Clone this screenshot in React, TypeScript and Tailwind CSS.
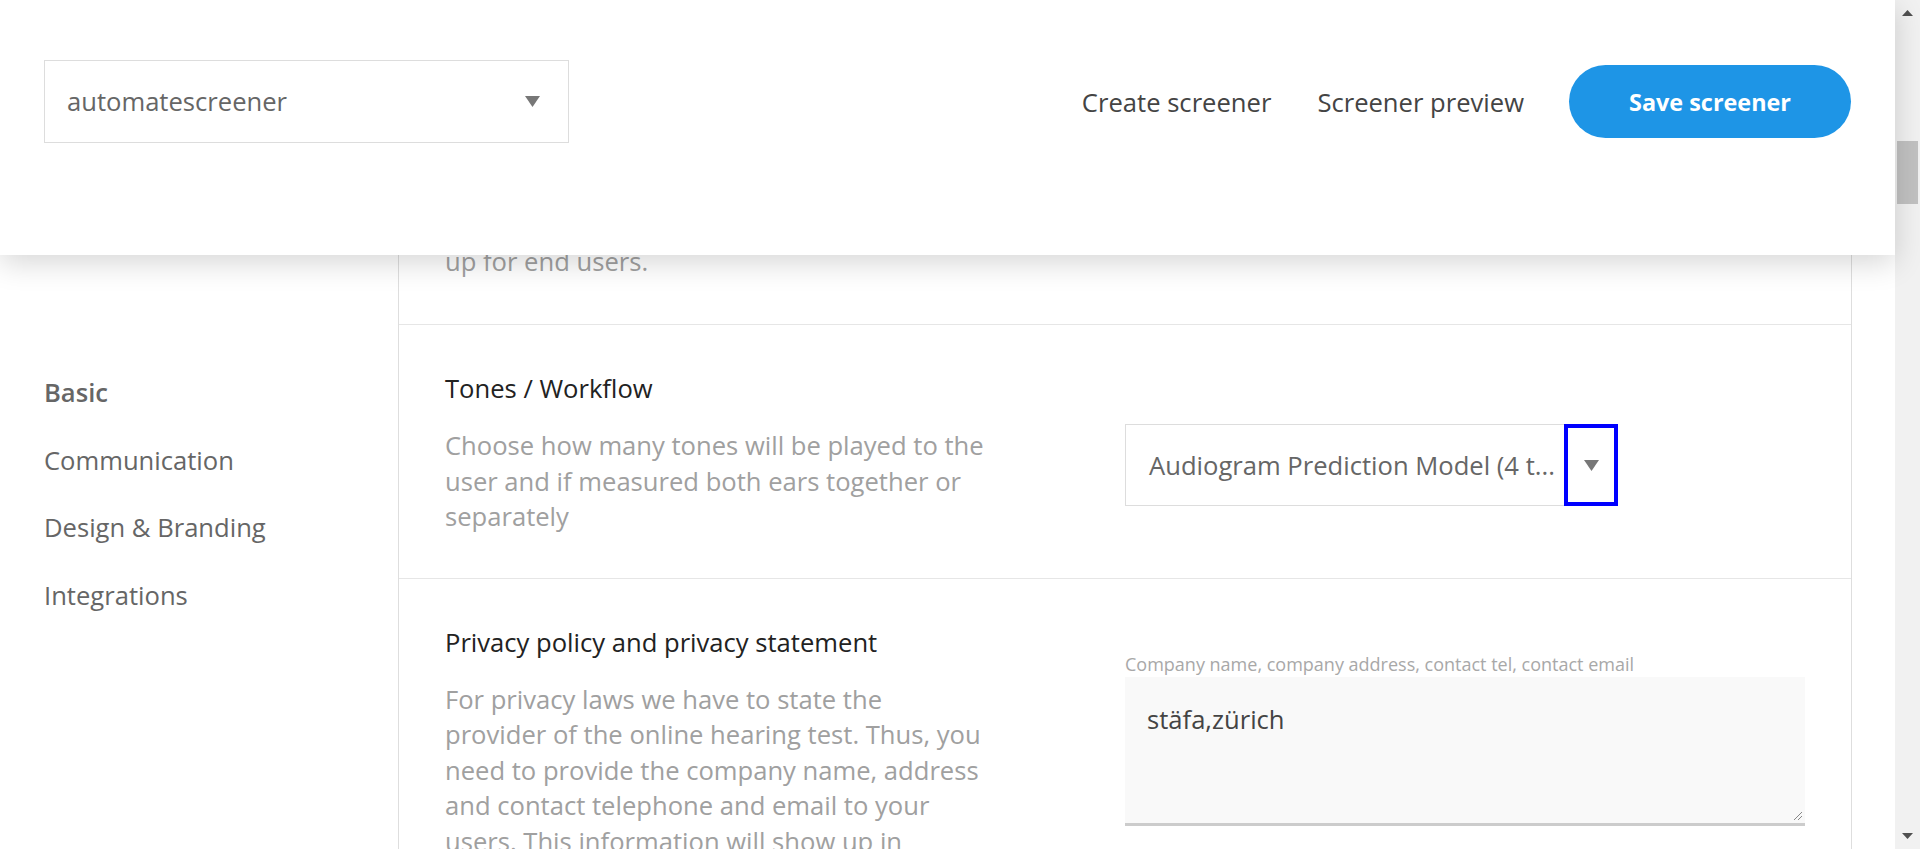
import React from 'react';

// small grey caret used by the select boxes
function Caret() {
  return (
    <svg width="15" height="11" viewBox="0 0 15 11">
      <polygon points="0,0 15,0 7.5,11" fill="#777777" />
    </svg>
  );
}

const menu = ['Basic', 'Communication', 'Design & Branding', 'Integrations'];

export default function App() {
  return (
    <div className="flex h-[849px] w-[1920px] overflow-hidden bg-white font-['Open_Sans',sans-serif]">
      <div className="flex w-[1895px] flex-col">
        {/* Top bar */}
        <header className="relative z-10 flex h-[255px] shrink-0 items-start bg-white pl-[44px] pr-[44px] pt-[60px] shadow-[0_8px_28px_rgba(0,0,0,0.16)]">
          <div className="flex h-[83px] w-[525px] items-center justify-between border border-[#dddddd] pl-[22px] pr-[28px]">
            <span className="pt-[2px] text-[25.6px] text-[#666666]">automatescreener</span>
            <Caret />
          </div>
          <nav className="ml-auto flex h-[83px] items-center pt-[3px]">
            <a className="text-[25.6px] text-[#444444]">Create screener</a>
            <a className="ml-[46px] text-[25.6px] text-[#444444]">Screener preview</a>
            <button className="ml-[45px] -mt-[3px] flex h-[73px] w-[282px] items-center justify-center rounded-full bg-[#1e95e6] pt-[3px] text-[23.4px] font-bold text-white">
              Save screener
            </button>
          </nav>
        </header>

        <div className="flex flex-1">
          {/* Side menu */}
          <aside className="flex w-[398px] shrink-0 flex-col gap-[32.5px] pl-[44px] pt-[120px]">
            {menu.map((m, i) => (
              <div
                key={m}
                className={`text-[25.6px] leading-[35px] text-[#666666] ${i === 0 ? 'font-semibold' : ''}`}
              >
                {m}
              </div>
            ))}
          </aside>

          {/* Settings card */}
          <main className="w-[1454px] shrink-0 border-x border-[#dedede]">
            <div className="-mt-[11px] border-b border-[#e6e6e6] px-[46px] pb-[45px] text-[25.6px] leading-[35px] text-[#a0a0a0]">
              up for end users.
            </div>

            <section className="grid grid-cols-2 border-b border-[#e6e6e6] px-[46px] pb-[43px] pt-[46px]">
              <div>
                <h3 className="text-[25.6px] leading-[35px] text-[#222222]">Tones / Workflow</h3>
                <p className="mt-[22px] w-[544px] text-[25.6px] leading-[35.5px] text-[#a0a0a0]">
                  Choose how many tones will be played to the user and if measured both ears together or separately
                </p>
              </div>
              <div>
                <div className="mt-[53px] flex h-[82px] w-[493px] items-center border border-[#dddddd] pl-[23px]">
                  <span className="flex-1 whitespace-nowrap pt-[2px] text-[25.6px] text-[#666666]">
                    Audiogram Prediction Model (4 t...
                  </span>
                  <span className="-my-px -mr-px flex h-[82px] w-[54px] items-center justify-center border-4 border-[#0000ff]">
                    <Caret />
                  </span>
                </div>
              </div>
            </section>

            <section className="grid grid-cols-2 px-[46px] pt-[46px]">
              <div>
                <h3 className="text-[25.6px] leading-[35px] text-[#222222]">Privacy policy and privacy statement</h3>
                <p className="mt-[22px] w-[544px] text-[25.6px] leading-[35.5px] text-[#a0a0a0]">
                  For privacy laws we have to state the provider of the online hearing test. Thus, you need to provide
                  the company name, address and contact telephone and email to your users. This information will show
                  up in imprint and footer of the hearing test.
                </p>
              </div>
              <div>
                <div className="mt-[27px] text-[18px] leading-[24px] text-[#a8a8a8]">
                  Company name, company address, contact tel, contact email
                </div>
                <div className="relative mt-px h-[149px] w-[680px] border-b-[3px] border-[#cccccc] bg-[#f9f9f9] pl-[22px] pt-[25px]">
                  <span className="text-[25.6px] leading-[35px] text-[#444444]">stäfa,zürich</span>
                  <svg className="absolute bottom-[2px] right-[2px]" width="10" height="10" viewBox="0 0 10 10">
                    <line x1="9" y1="1" x2="1" y2="9" stroke="#888" strokeWidth="1" />
                    <line x1="9" y1="5" x2="5" y2="9" stroke="#888" strokeWidth="1" />
                  </svg>
                </div>
              </div>
            </section>
          </main>
        </div>
      </div>

      {/* Browser scrollbar */}
      <div className="flex w-[25px] shrink-0 flex-col items-center bg-[#f1f1f1]">
        <svg className="mt-[10px]" width="11" height="6" viewBox="0 0 11 6">
          <polygon points="5.5,0 11,6 0,6" fill="#505050" />
        </svg>
        <div className="mt-[125px] h-[63px] w-[21px] bg-[#c1c1c1]" />
        <svg className="mb-[10px] mt-auto" width="11" height="6" viewBox="0 0 11 6">
          <polygon points="0,0 11,0 5.5,6" fill="#505050" />
        </svg>
      </div>
    </div>
  );
}
